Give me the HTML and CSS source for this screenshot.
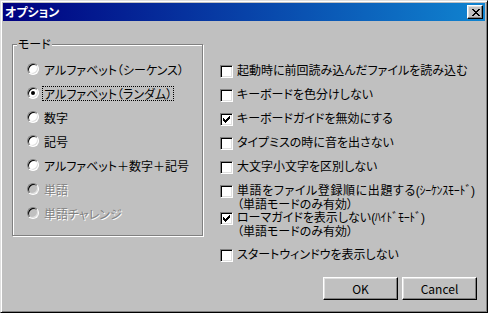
FILE: index.html
```html
<!DOCTYPE html>
<html lang="ja">
<head>
<meta charset="UTF-8">
<title>オプション</title>
<link rel="stylesheet" href="styles.css">
</head>
<body>
    <div class="window">
        <div class="titlebar">
            <span class="title">オプション</span>
            <button class="close" type="button">
                <svg width="8" height="7" viewBox="0 0 8 7" shape-rendering="crispEdges">
                    <path d="M0 0h2v1h-2zM6 0h2v1h-2zM1 1h2v1h-2zM5 1h2v1h-2zM2 2h4v1h-4zM3 3h2v1h-2zM2 4h4v1h-4zM1 5h2v1h-2zM5 5h2v1h-2zM0 6h2v1h-2zM6 6h2v1h-2z" fill="#000"/>
                </svg>
            </button>
        </div>

        <div class="body">
            <div class="main">
                <fieldset class="group">
                    <legend>モード</legend>
                    <label class="radio"><span class="dot"></span><span class="text">アルファベット（シーケンス）</span></label>
                    <label class="radio checked"><span class="dot"></span><span class="text focus">アルファベット（ランダム）</span></label>
                    <label class="radio"><span class="dot"></span><span class="text">数字</span></label>
                    <label class="radio"><span class="dot"></span><span class="text">記号</span></label>
                    <label class="radio"><span class="dot"></span><span class="text">アルファベット＋数字＋記号</span></label>
                    <label class="radio disabled"><span class="dot"></span><span class="text">単語</span></label>
                    <label class="radio disabled"><span class="dot"></span><span class="text">単語チャレンジ</span></label>
                </fieldset>

                <div class="checks">
                    <label class="check"><span class="box"></span><span class="text">起動時に前回読み込んだファイルを読み込む</span></label>
                    <label class="check"><span class="box"></span><span class="text">キーボードを色分けしない</span></label>
                    <label class="check checked"><span class="box"><svg width="7" height="7" viewBox="0 0 7 7" shape-rendering="crispEdges"><path d="M6 0h1v1h-1zM5 1h2v1h-2zM0 2h1v1h-1zM4 2h3v1h-3zM0 3h2v1h-2zM3 3h3v1h-3zM0 4h5v1h-5zM1 5h3v1h-3zM2 6h1v1h-1z" fill="#000"/></svg></span><span class="text">キーボードガイドを無効にする</span></label>
                    <label class="check"><span class="box"></span><span class="text">タイプミスの時に音を出さない</span></label>
                    <label class="check"><span class="box"></span><span class="text">大文字小文字を区別しない</span></label>
                    <label class="check seq"><span class="box"></span><span class="text wide">単語をファイル登録順に出題する<span class="half">(ｼｰｹﾝｽﾓｰﾄﾞ)</span><span class="note">（単語モードのみ有効）</span></span></label>
                    <label class="check checked hide"><span class="box"><svg width="7" height="7" viewBox="0 0 7 7" shape-rendering="crispEdges"><path d="M6 0h1v1h-1zM5 1h2v1h-2zM0 2h1v1h-1zM4 2h3v1h-3zM0 3h2v1h-2zM3 3h3v1h-3zM0 4h5v1h-5zM1 5h3v1h-3zM2 6h1v1h-1z" fill="#000"/></svg></span><span class="text">ローマガイドを表示しない<span class="half">(ﾊｲﾄﾞﾓｰﾄﾞ)</span><span class="note">（単語モードのみ有効）</span></span></label>
                    <label class="check"><span class="box"></span><span class="text">スタートウィンドウを表示しない</span></label>
                </div>
            </div>

            <div class="buttons">
                <button class="btn" type="button">OK</button>
                <button class="btn" type="button">Cancel</button>
            </div>
        </div>
    </div>
</body>
</html>
```

FILE: styles.css
```css
/* classic dialog */
* {
    margin: 0;
    padding: 0;
    box-sizing: border-box;
}
body {
    background: #c0c0c0;
    font-family: "Noto Sans CJK JP", sans-serif;
    font-size: 12px;
    font-feature-settings: "palt";
    color: #000;
}
.window {
    width: 488px;
    height: 313px;
    display: flex;
    flex-direction: column;
    padding: 2px;
    background: #c0c0c0;
    border: 1px solid;
    border-color: #dfdfdf #000 #000 #dfdfdf;
    box-shadow: inset 1px 1px #fff, inset -1px -1px #808080;
}
.titlebar {
    height: 18px;
    display: flex;
    align-items: center;
    justify-content: space-between;
    padding: 0 2px 0 2px;
    background: linear-gradient(to right, #000080, #1084d0);
}
.titlebar .title {
    color: #fff;
    font-weight: 700;
    line-height: 14px;
}
.titlebar .close {
    width: 16px;
    height: 14px;
    display: flex;
    align-items: center;
    justify-content: center;
    padding: 0 0 0 1px;
    background: #c0c0c0;
    border: 1px solid;
    border-color: #fff #000 #000 #fff;
    box-shadow: inset -1px -1px #808080, inset 1px 1px #dfdfdf;
}
.body {
    flex: 1;
    display: flex;
    flex-direction: column;
    padding: 16px 8px 10px 9px;
}
.main {
    display: flex;
    align-items: flex-start;
}

/* mode group */
.group {
    width: 191px;
    margin: 0;
    min-width: 0;
    padding: 6px 0 10px 14px;
    border: 1px solid #808080;
    box-shadow: 1px 1px 0 #fff, inset 1px 1px 0 #fff;
}
.group legend {
    margin-left: -10px;
    padding: 0 1px;
    line-height: 14px;
    background: #c0c0c0;
}
.radio {
    height: 24px;
    display: flex;
    align-items: center;
}
.radio .dot {
    width: 12px;
    height: 12px;
    flex: none;
    display: flex;
    align-items: center;
    justify-content: center;
    border-radius: 50%;
    background: #fff;
    border: 1px solid;
    border-color: #808080 #fff #fff #808080;
    box-shadow: inset 1px 1px #000, inset -1px -1px #dfdfdf;
}
.radio.checked .dot::after {
    content: "";
    width: 4px;
    height: 4px;
    border-radius: 50%;
    background: #000;
}
.radio .text {
    margin-left: 3px;
    padding: 0 1px;
    line-height: 13px;
    border: 1px dotted transparent;
}
.radio .text.focus {
    border-color: #000;
}
.radio.disabled .dot {
    background: #c0c0c0;
}
.radio.disabled .text {
    color: #808080;
    text-shadow: 1px 1px 0 #fff;
}

/* options */
.checks {
    margin-left: 17px;
    padding-top: 28px;
    display: flex;
    flex-direction: column;
}
.check {
    display: flex;
    align-items: flex-start;
    margin-bottom: 11px;
}
.check .box {
    width: 13px;
    height: 13px;
    flex: none;
    padding: 2px 0 0 2px;
    background: #fff;
    border: 1px solid;
    border-color: #808080 #fff #fff #808080;
    box-shadow: inset 1px 1px #000, inset -1px -1px #dfdfdf;
}
.check .box svg {
    display: block;
}
.check .text {
    margin-left: 4px;
    font-family: "Liberation Sans", "Noto Sans CJK JP", sans-serif;
    line-height: 13px;
    white-space: nowrap;
}
.check .text.wide {
    letter-spacing: 0.6px;
}
.check .half {
    font-feature-settings: normal;
    letter-spacing: -0.3px;
}
.check .note {
    display: block;
    line-height: 14px;
    letter-spacing: 0;
}
.check.seq {
    margin-bottom: 0;
}
.check.hide {
    margin-bottom: 10px;
}

/* buttons */
.buttons {
    margin-top: auto;
    display: flex;
    justify-content: flex-end;
    gap: 4px;
}
.btn {
    width: 75px;
    height: 23px;
    font-family: "Noto Sans CJK JP", sans-serif;
    font-size: 12px;
    color: #000;
    background: #c0c0c0;
    border: 1px solid;
    border-color: #fff #000 #000 #fff;
    box-shadow: inset -1px -1px #808080, inset 1px 1px #dfdfdf;
}
```
